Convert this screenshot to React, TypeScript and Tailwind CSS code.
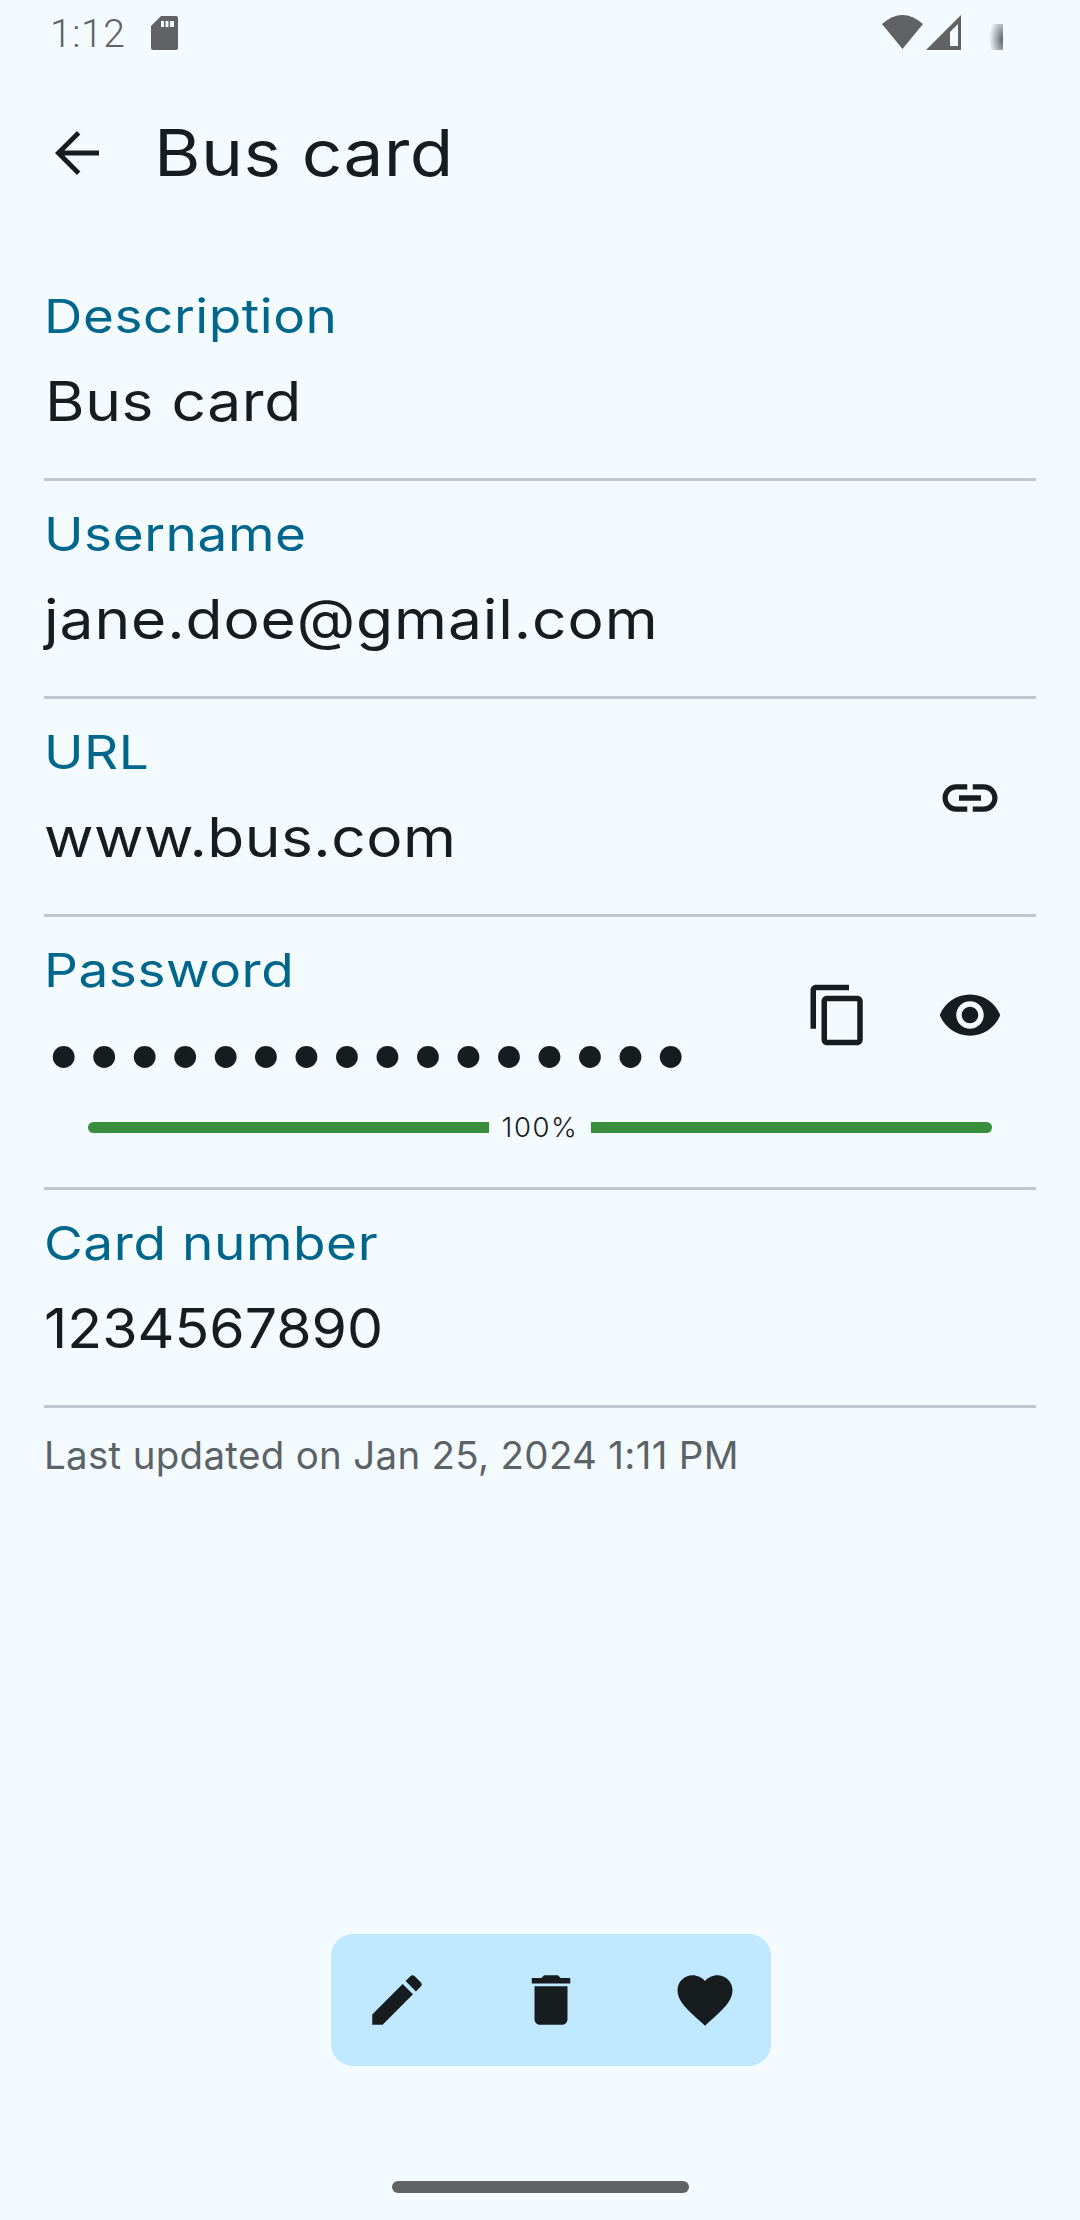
const INK = "#171c1f";

function Icon({ d, size = 66, className = "" }: { d: string; size?: number; className?: string }) {
  return (
    <svg width={size} height={size} viewBox="0 0 24 24" fill={INK} className={className}>
      <path d={d} />
    </svg>
  );
}

const P = {
  back: "M20 11.1H7.4l5.8-5.8L12 4l-8 8 8 8 1.2-1.3-5.8-5.8H20v-1.8z",
  link: "M3.9 12c0-1.71 1.39-3.1 3.1-3.1h4V7H7c-2.76 0-5 2.24-5 5s2.24 5 5 5h4v-1.9H7c-1.71 0-3.1-1.39-3.1-3.1zM8 13h8v-2H8v2zm9-6h-4v1.9h4c1.71 0 3.1 1.39 3.1 3.1s-1.39 3.1-3.1 3.1h-4V17h4c2.76 0 5-2.24 5-5s-2.24-5-5-5z",
  copy: "M16 1H4c-1.1 0-2 .9-2 2v14h2V3h12V1zm3 4H8c-1.1 0-2 .9-2 2v14c0 1.1.9 2 2 2h11c1.1 0 2-.9 2-2V7c0-1.1-.9-2-2-2zm0 16H8V7h11v14z",
  eye: "M12 4.5C7 4.5 2.73 7.61 1 12c1.73 4.39 6 7.5 11 7.5s9.27-3.11 11-7.5c-1.73-4.39-6-7.5-11-7.5zM12 17c-2.76 0-5-2.24-5-5s2.24-5 5-5 5 2.24 5 5-2.24 5-5 5zm0-8c-1.66 0-3 1.34-3 3s1.34 3 3 3 3-1.34 3-3-1.34-3-3-3z",
  edit: "M3 17.25V21h3.75L17.81 9.94l-3.75-3.75L3 17.25zM20.71 7.04c.39-.39.39-1.02 0-1.41l-2.34-2.34c-.39-.39-1.02-.39-1.41 0l-1.83 1.83 3.75 3.75 1.83-1.83z",
  trash: "M6 19c0 1.1.9 2 2 2h8c1.1 0 2-.9 2-2V7H6v12zM19 4h-3.5l-1-1h-5l-1 1H5v2h14V4z",
  heart: "M12 21.35l-1.45-1.32C5.4 15.36 2 12.28 2 8.5 2 5.42 4.42 3 7.5 3c1.74 0 3.41.81 4.5 2.09C13.09 3.81 14.76 3 16.5 3 19.58 3 22 5.42 22 8.5c0 3.78-3.4 6.86-8.55 11.54L12 21.35z",
};

function StatusBar() {
  return (
    <div className="flex items-start h-[66px] pl-[50px] pt-[15px] font-['Roboto',sans-serif]">
      <span className="text-[39px] leading-[39px] font-light text-[#5f6364] tracking-[0.6px]">1:12</span>
      <svg width="27" height="34" viewBox="0 0 27 34" className="ml-[25px] mt-px">
        <path d="M10 0H25a2 2 0 0 1 2 2V32a2 2 0 0 1-2 2H2a2 2 0 0 1-2-2V10z" fill="#5f6364" />
        <rect x="10" y="5" width="3" height="6" fill="#f4fbff" />
        <rect x="14.5" y="5" width="3" height="6" fill="#f4fbff" />
        <rect x="19" y="5" width="4" height="6" fill="#f4fbff" />
      </svg>
      <div className="flex-1" />
      <svg width="41" height="34" viewBox="0 0 41 34">
        <path d="M0 9Q20.5 -9 41 9L20.5 34Z" fill="#5f6364" />
      </svg>
      <svg width="35" height="35" viewBox="0 0 35 35" className="ml-[3px]">
        <path d="M0 35L35 0V35ZM24 31H32V9L24 17Z" fill="#5f6364" fillRule="evenodd" />
      </svg>
      <svg width="14" height="26" viewBox="0 0 14 26" className="ml-[28px] mt-[9px] mr-[77px]">
        <defs>
          <radialGradient id="bat" cx="1" cy="0.6" r="1">
            <stop offset="0" stopColor="#5f6364" />
            <stop offset="1" stopColor="#5f6364" stopOpacity="0" />
          </radialGradient>
        </defs>
        <rect width="14" height="26" fill="url(#bat)" />
      </svg>
    </div>
  );
}

function Label({ children }: { children: string }) {
  return (
    <div className="origin-left scale-x-[1.13] whitespace-nowrap text-[47px] leading-[66px] text-[#00668b] tracking-[0.5px]">
      {children}
    </div>
  );
}

function Field({
  label,
  value,
  valueClass = "",
  right,
}: {
  label: string;
  value: string;
  valueClass?: string;
  right?: React.ReactNode;
}) {
  return (
    <div className="flex items-start h-[215px] border-b-[3px] border-[#c0c8cf] box-content">
      <div className="flex-1 min-w-0 pt-[20px]">
        <Label>{label}</Label>
        <div className={`mt-[19px] origin-left whitespace-nowrap text-[55px] leading-[66px] text-[#171c1f] ${valueClass}`}>{value}</div>
      </div>
      {right}
    </div>
  );
}

function IconButton({ d }: { d: string }) {
  return (
    <div className="w-[132px] h-[66px] flex items-center justify-center">
      <Icon d={d} />
    </div>
  );
}

export default function App() {
  return (
    <div className="relative flex flex-col w-[1080px] h-[2220px] overflow-hidden bg-[#f4fbff] font-['Inter',sans-serif]">
      <StatusBar />
      <header className="flex items-center h-[176px] pl-[44px] pb-[3px]">
        <Icon d={P.back} />
        <h1 className="ml-[44px] origin-left scale-x-[1.11] text-[64px] leading-[66px] font-normal text-[#171c1f] tracking-[0.4px]">Bus card</h1>
      </header>
      <main className="flex flex-col px-[44px] pt-[21px]">
        <Field label="Description" value="Bus card" valueClass="scale-x-[1.1] tracking-[0.5px] pl-[1px]" />
        <Field label="Username" value="jane.doe@gmail.com" valueClass="scale-x-[1.1] tracking-[0.8px]" />
        <Field
          label="URL"
          value="www.bus.com"
          valueClass="scale-x-[1.1] tracking-[0.4px]"
          right={
            <div className="mt-[66px]">
              <IconButton d={P.link} />
            </div>
          }
        />
        <div className="h-[270px] border-b-[3px] border-[#c0c8cf] box-content">
          <div className="flex items-start">
            <div className="flex-1 min-w-0 pt-[20px]">
              <Label>Password</Label>
              <div className="mt-[16px] h-[66px] text-[70px] leading-[66px] text-[#171c1f] tracking-[1.1px] whitespace-nowrap">
                ••••••••••••••••
              </div>
            </div>
            <div className="flex mt-[65px]">
              <IconButton d={P.copy} />
              <IconButton d={P.eye} />
            </div>
          </div>
          <div className="flex items-center mt-[27px] ml-[44px] mr-[44px] h-[30px]">
            <div className="flex-1 h-[11px] rounded-l-full bg-[#388e3c]" />
            <span className="w-[102px] text-center text-[27.5px] leading-[30px] font-light text-[#171c1f] tracking-[1.6px]">100%</span>
            <div className="flex-1 h-[11px] rounded-r-full bg-[#388e3c]" />
          </div>
        </div>
        <Field label="Card number" value="1234567890" valueClass="scale-x-[1.04]" />
        <p className="mt-[24px] text-[38.5px] leading-[46px] text-[#5c6367] tracking-[0.3px]">Last updated on Jan 25, 2024 1:11 PM</p>
      </main>
      <div className="flex-1" />
      <div className="flex justify-center">
        <div className="flex ml-[22px] gap-[88px] p-[33px] rounded-[22px] bg-[#c0e8ff]">
          <Icon d={P.edit} />
          <Icon d={P.trash} />
          <Icon d={P.heart} />
        </div>
      </div>
      <div className="flex justify-center pt-[115px] pb-[27px]">
        <div className="w-[297px] h-[12px] rounded-full bg-[#5f6364]" />
      </div>
    </div>
  );
}
